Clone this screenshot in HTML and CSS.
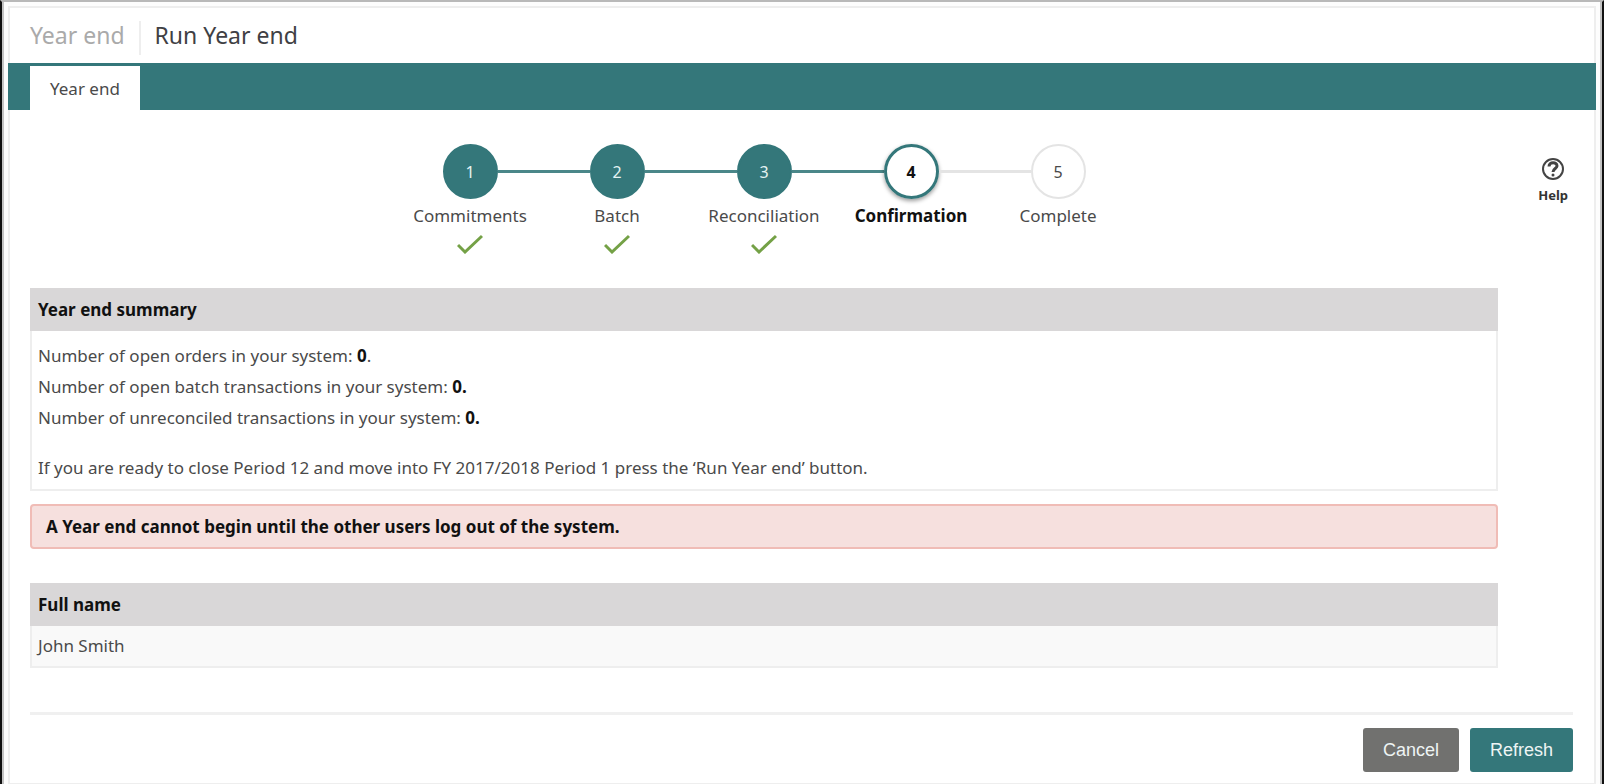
FILE: index.html
```html
<!DOCTYPE html>
<html lang="en">
<head>
    <meta charset="UTF-8">
    <meta name="viewport" content="width=device-width, initial-scale=1.0">
    <title>Run Year end</title>
    <link rel="stylesheet" href="styles.css">
</head>
<body>
    <div class="page">

        <header class="page-header">
            <a href="#" class="crumb">Year end</a>
            <h1>Run Year end</h1>
        </header>

        <nav class="tabs">
            <a href="#" class="tab">Year end</a>
        </nav>

        <div class="content">
            <main>
                <ol class="steps">
                    <li class="step done">
                        <div class="track"><span class="circle">1</span></div>
                        <span class="step-label">Commitments</span>
                        <svg class="tick" viewBox="0 0 26 20"><path d="M1 11 L8 18 L25 2"/></svg>
                    </li>
                    <li class="step done">
                        <div class="track"><span class="circle">2</span></div>
                        <span class="step-label">Batch</span>
                        <svg class="tick" viewBox="0 0 26 20"><path d="M1 11 L8 18 L25 2"/></svg>
                    </li>
                    <li class="step done">
                        <div class="track"><span class="circle">3</span></div>
                        <span class="step-label">Reconciliation</span>
                        <svg class="tick" viewBox="0 0 26 20"><path d="M1 11 L8 18 L25 2"/></svg>
                    </li>
                    <li class="step current">
                        <div class="track"><span class="circle">4</span></div>
                        <span class="step-label">Confirmation</span>
                    </li>
                    <li class="step">
                        <div class="track"><span class="circle">5</span></div>
                        <span class="step-label">Complete</span>
                    </li>
                </ol>

                <section class="summary">
                    <h2>Year end summary</h2>
                    <div class="summary-body">
                        <p>Number of open orders in your system: <b>0</b>.</p>
                        <p>Number of open batch transactions in your system: <b>0.</b></p>
                        <p>Number of unreconciled transactions in your system: <b>0.</b></p>
                        <p class="ready">If you are ready to close Period 12 and move into FY 2017/2018 Period 1 press the ‘Run Year end’ button.</p>
                    </div>
                </section>

                <div class="alert">A Year end cannot begin until the other users log out of the system.</div>

                <table class="users">
                    <thead>
                        <tr><th>Full name</th></tr>
                    </thead>
                    <tbody>
                        <tr><td>John Smith</td></tr>
                    </tbody>
                </table>
            </main>

            <aside>
                <a href="#" class="help">
                    <svg viewBox="0 0 24 24">
                        <circle cx="12" cy="12" r="10"/>
                        <path class="hook" d="M8 9.500 C8 4.500 16 4.500 16 9 C16 11.500 12 11.500 12 15"/>
                        <circle class="dot" cx="12" cy="18" r="1.500"/>
                    </svg>
                    Help
                </a>
            </aside>
        </div>

        <footer class="actions">
            <button type="button" class="btn cancel">Cancel</button>
            <button type="button" class="btn refresh">Refresh</button>
        </footer>

    </div>
</body>
</html>
```

FILE: styles.css
```css
* {
    box-sizing: border-box;
}

body {
    margin: 0;
    min-height: 100vh;
    padding: 4px 4px 0 4px;
    border-top: 2px solid #b9b9b9;
    border-left: 2px solid #111;
    border-right: 2px solid #111;
    background: #fdfdfd;
    font-family: 'Noto Sans', 'Open Sans', sans-serif;
    font-size: 17px;
    line-height: 24px;
    color: #4a4a4a;
    box-shadow: inset 2px 0 #c4c4c4, inset -2px 0 #c4c4c4;
}

a {
    color: inherit;
    text-decoration: none;
}

h1, h2, p, ol {
    margin: 0;
    padding: 0;
}

.page {
    margin: 0 2px;
    border: 2px solid #eee;
    border-bottom-width: 1px;
    background: #fff;
}

/* header */
.page-header {
    display: flex;
    height: 55px;
    padding: 0 20px;
    font-size: 23px;
    line-height: 55px;
}

.crumb {
    color: #aaa;
}

h1 {
    margin-left: 14px;
    font-size: 23px;
    font-weight: normal;
    color: #404044;
}

h1::before {
    content: "";
    display: inline-block;
    width: 2px;
    height: 34px;
    margin-right: 14px;
    vertical-align: middle;
    background: #eee;
}

/* tab bar, runs over the side borders of the page */
.tabs {
    display: flex;
    margin: 0 -2px;
    padding: 3px 22px 0;
    background: #34777a;
}

.tab {
    padding: 2px 20px 0;
    line-height: 42px;
    background: #fff;
}

.content {
    display: flex;
    padding: 34px 20px 0;
}

main {
    flex: 1;
}

aside {
    display: flex;
    justify-content: flex-end;
    align-items: flex-start;
    width: 76px;
    padding: 13px 6px 0 0;
}

/* steps */
.steps {
    display: flex;
    justify-content: center;
    height: 144px;
    list-style: none;
}

.step {
    display: flex;
    flex-direction: column;
    align-items: center;
    width: 147px;
}

.track {
    display: flex;
    align-items: center;
    width: 100%;
}

.track::before, .track::after {
    content: "";
    flex: 1;
    height: 3px;
    background: #e4e4e4;
}

.done .track::before, .done .track::after, .current .track::before {
    background: #4a8789;
}

.step:first-child .track::before, .step:last-child .track::after {
    background: none;
}

.circle {
    width: 55px;
    height: 55px;
    border: 2px solid #e4e4e4;
    border-radius: 50%;
    font-size: 16px;
    line-height: 52px;
    text-align: center;
}

.done .circle {
    border-color: #34777a;
    background: #34777a;
    color: #e4f3f3;
}

.current .circle {
    border: 3px solid #34777a;
    line-height: 50px;
    box-shadow: 0 2px 4px rgba(0, 0, 0, 0.4);
}

.current {
    font-weight: bold;
    color: #111;
}

.step-label {
    margin-top: 5px;
}

.tick {
    width: 26px;
    height: 20px;
    margin-top: 6px;
    fill: none;
    stroke: #74a146;
    stroke-width: 3;
}

/* summary */
h2, th {
    padding: 0 8px;
    background: #d9d7d8;
    font-size: 17px;
    font-weight: bold;
    line-height: 43px;
    text-align: left;
    color: #111;
}

.summary-body {
    padding: 9px 6px 6px;
    border: 2px solid #eee;
    border-top: none;
}

.summary p {
    line-height: 31px;
}

.summary .ready {
    margin-top: 19px;
}

b {
    color: #111;
}

.alert {
    margin: 13px 0 34px;
    padding: 0 14px;
    border: 2px solid #f0bcb6;
    border-radius: 4px;
    background: #f6e0de;
    font-weight: bold;
    line-height: 41px;
    color: #111;
}

.users {
    width: 100%;
    border-collapse: separate;
    border-spacing: 0;
}

.users td {
    padding: 0 6px;
    border: 2px solid #eee;
    border-top: none;
    background: #f9f9f9;
    line-height: 40px;
}

/* help link */
.help {
    display: flex;
    flex-direction: column;
    align-items: center;
    font-size: 13px;
    font-weight: bold;
    color: #333;
}

.help svg {
    width: 24px;
    height: 24px;
    margin-bottom: 2px;
    fill: none;
    stroke: #444;
    stroke-width: 2;
}

.help .hook {
    stroke-width: 3;
}

.help .dot {
    fill: #444;
    stroke: none;
}

/* buttons */
.actions {
    display: flex;
    justify-content: flex-end;
    gap: 11px;
    margin: 44px 21px 0 20px;
    padding: 13px 0 11px;
    border-top: 3px solid #f0f0f0;
}

.btn {
    height: 44px;
    padding: 0 20px;
    border: none;
    border-radius: 3px;
    font-family: 'Liberation Sans', Arial, sans-serif;
    font-size: 18px;
    color: #eef4f4;
    cursor: pointer;
}

.cancel {
    background: #71716f;
}

.refresh {
    background: #34777a;
}
```
